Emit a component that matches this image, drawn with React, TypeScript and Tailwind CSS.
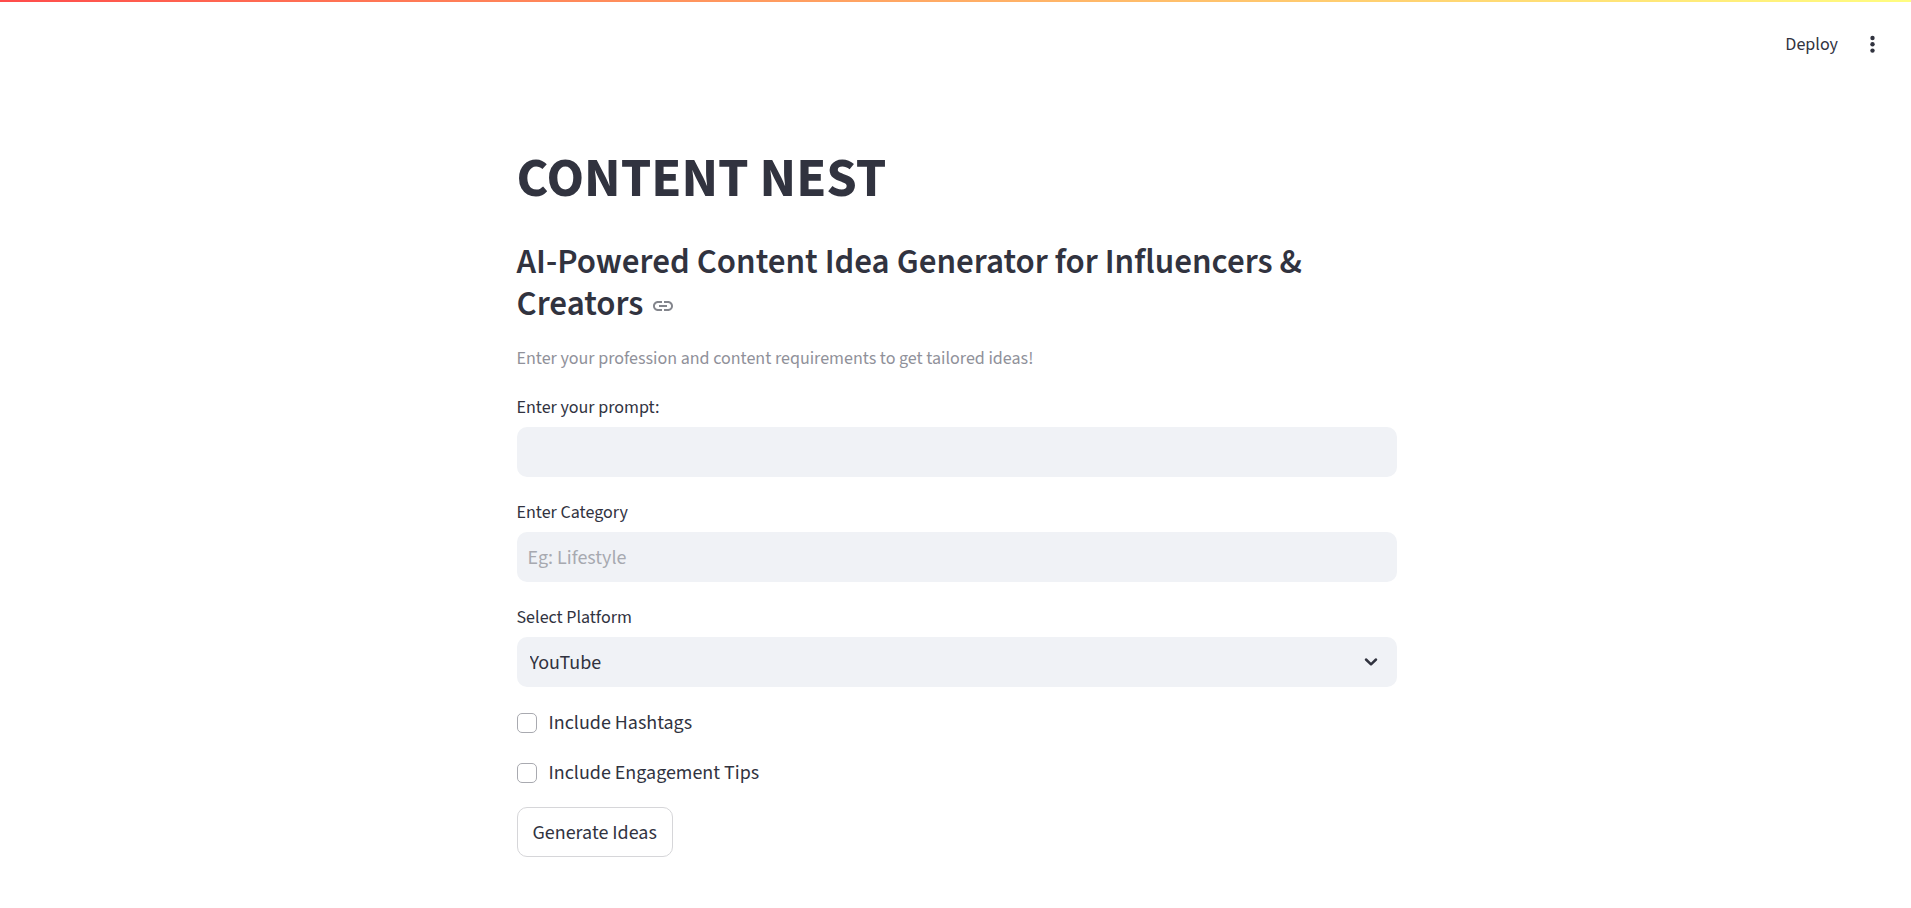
import { useState } from "react";
import type { ReactNode } from "react";

function Field({ id, label, children }: { id: string; label: string; children: ReactNode }) {
  return (
    <div className="flex flex-col gap-[5px]">
      <label htmlFor={id} className="self-start text-[18px] leading-7">
        {label}
      </label>
      {children}
    </div>
  );
}

function Checkbox({ label }: { label: string }) {
  return (
    <label className="flex items-center gap-3 self-start text-[20px] leading-[30px]">
      <input
        type="checkbox"
        className="size-5 shrink-0 appearance-none rounded-[5px] border border-[#a9aab0] bg-white checked:border-[#ff4b4b] checked:bg-[#ff4b4b]"
      />
      <span className="pt-px">{label}</span>
    </label>
  );
}

export default function App() {
  const [prompt, setPrompt] = useState("");
  const [category, setCategory] = useState("");

  return (
    <div className="min-h-screen bg-white font-['Source_Sans_3','Noto_Sans_CJK_JP',sans-serif] text-[#31333f]">
      <div className="h-0.5 bg-linear-to-r from-[#ff4b4b] to-[#fffd80]" />
      <header className="flex h-[84px] items-center justify-end gap-4 pr-[29px]">
        <button type="button" className="px-2 pt-0.5 text-[18px] leading-7">
          Deploy
        </button>
        <button type="button" aria-label="Main menu" className="flex size-5 items-center justify-center">
          <svg viewBox="0 0 20 20" className="size-5" fill="currentColor" aria-hidden="true">
            <circle cx="10.5" cy="4" r="2.2" />
            <circle cx="10.5" cy="10.3" r="2.2" />
            <circle cx="10.5" cy="16.6" r="2.2" />
          </svg>
        </button>
      </header>

      <main className="mx-auto flex w-full max-w-[922px] flex-col pr-5 pb-12 pl-[22px] pt-[60px]">
        <h1 className="text-[55px] leading-[66px] font-bold">CONTENT NEST</h1>
        <h2 className="mt-[29px] text-[35px] leading-[42px] font-semibold">
          AI-Powered Content Idea Generator for Influencers &amp; Creators
          <a href="#ideas" aria-label="Link to this heading" className="ml-2 inline-block align-middle text-[#83858c]">
            <svg viewBox="0 0 24 24" className="size-6" fill="currentColor" aria-hidden="true">
              <path d="M3.9 12c0-1.71 1.39-3.1 3.1-3.1h4V7H7c-2.76 0-5 2.24-5 5s2.24 5 5 5h4v-1.9H7c-1.71 0-3.1-1.39-3.1-3.1zM8 13h8v-2H8v2zm9-6h-4v1.9h4c1.71 0 3.1 1.39 3.1 3.1s-1.39 3.1-3.1 3.1h-4V17h4c2.76 0 5-2.24 5-5s-2.24-5-5-5z" />
            </svg>
          </a>
        </h2>
        <p className="mt-5 text-[18px] leading-7 text-[#90919a]">
          Enter your profession and content requirements to get tailored ideas!
        </p>

        <form className="mt-[21px] flex flex-col gap-5" onSubmit={(e) => e.preventDefault()}>
          <div className="flex flex-col gap-[22px]">
            <Field id="prompt" label="Enter your prompt:">
              <input
                id="prompt"
                type="text"
                value={prompt}
                onChange={(e) => setPrompt(e.target.value)}
                className="h-[50px] w-full rounded-[10px] bg-[#f0f2f6] px-[11px] pt-0.5 text-[20px] outline-none"
              />
            </Field>
            <Field id="category" label="Enter Category">
              <input
                id="category"
                type="text"
                placeholder="Eg: Lifestyle"
                value={category}
                onChange={(e) => setCategory(e.target.value)}
                className="h-[50px] w-full rounded-[10px] bg-[#f0f2f6] px-[11px] pt-0.5 text-[20px] outline-none placeholder:text-[#a7a9b0]"
              />
            </Field>
            <Field id="platform" label="Select Platform">
              <div className="relative">
                <select
                  id="platform"
                  className="block h-[50px] w-full appearance-none rounded-[10px] bg-[#f0f2f6] px-[13px] pt-0.5 text-[20px] outline-none"
                >
                  <option>YouTube</option>
                  <option>Instagram</option>
                  <option>TikTok</option>
                </select>
                <svg
                  viewBox="0 0 20 20"
                  className="pointer-events-none absolute top-[15px] right-4 size-5"
                  fill="none"
                  stroke="currentColor"
                  strokeWidth="2.5"
                  strokeLinecap="round"
                  strokeLinejoin="round"
                  aria-hidden="true"
                >
                  <path d="M5 7.5L10 12.3L15 7.5" />
                </svg>
              </div>
            </Field>
          </div>
          <div className="flex flex-col gap-[19px]">
            <Checkbox label="Include Hashtags" />
            <Checkbox label="Include Engagement Tips" />
            <button
              type="submit"
              className="h-[50px] self-start rounded-[10px] border border-[#d6d6d9] bg-white px-[15px] pt-0.5 text-[20px] leading-7"
            >
              Generate Ideas
            </button>
          </div>
        </form>
      </main>
    </div>
  );
}
